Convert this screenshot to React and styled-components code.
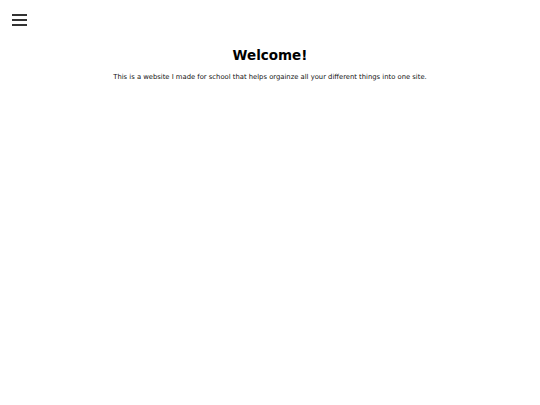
import styled, { createGlobalStyle } from 'styled-components';

const GlobalStyle = createGlobalStyle`
body {
  margin: 0;
  background: #ffffff;
  font-family: 'DejaVu Sans', Verdana, sans-serif;
}
`

const Page = styled.div`
width: 540px;
min-height: 405px;
`

const TopBar = styled.div`
padding: 14px 12px 0;
height: 27px;
box-sizing: border-box;
`

const MenuButton = styled.div`
display: flex;
flex-direction: column;
gap: 3px;
width: 15px;
cursor: pointer;
`

const MenuLine = styled.span`
display: block;
height: 2px;
background-color: #333333;
`

const Content = styled.main`
text-align: center;
`

const Title = styled.h1`
margin: 20px 0 0;
font-size: 13.5px;
line-height: 16px;
font-weight: 700;
color: #000000;
`

const Intro = styled.p`
margin: 10px 0 0;
font-size: 6.8px;
line-height: 8px;
color: #111111;
`

export default function App(){
    return (
        <Page>
            <GlobalStyle/>
            <TopBar>
                <MenuButton>
                    <MenuLine/>
                    <MenuLine/>
                    <MenuLine/>
                </MenuButton>
            </TopBar>
            <Content>
                <Title>Welcome!</Title>
                <Intro>This is a website I made for school that helps orgainze all your different things into one site.</Intro>
            </Content>
        </Page>
    );
}
